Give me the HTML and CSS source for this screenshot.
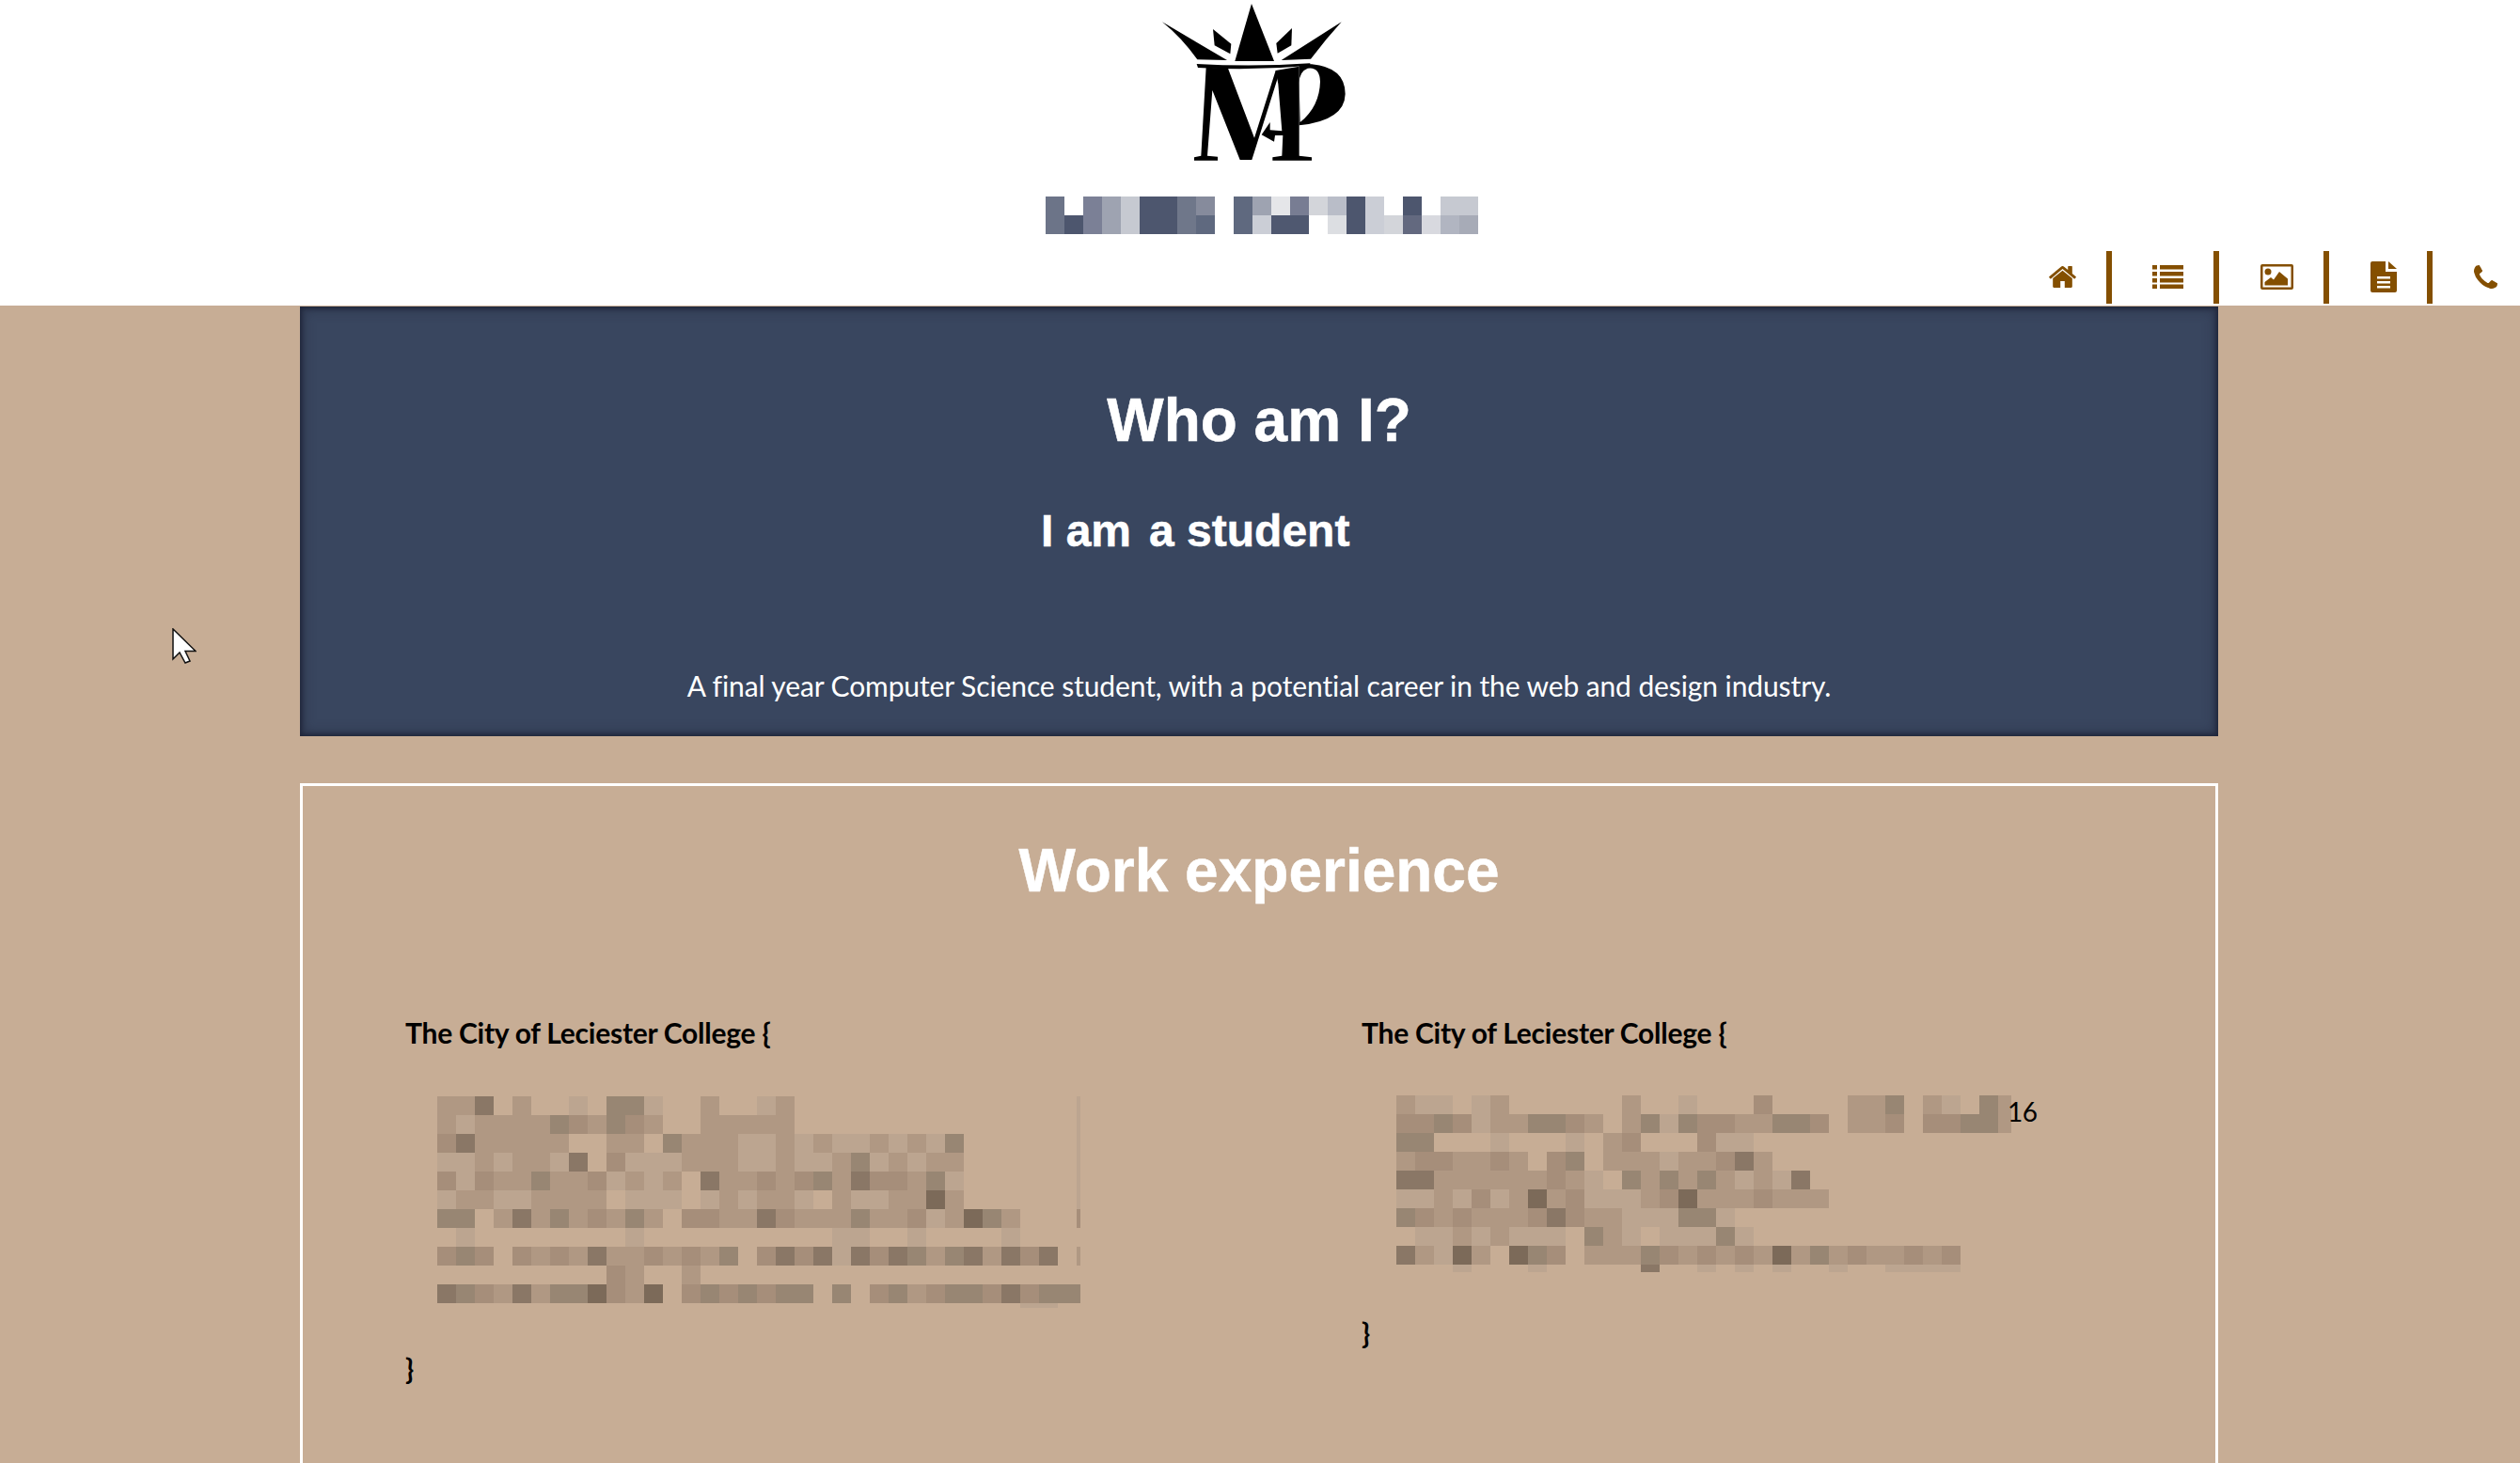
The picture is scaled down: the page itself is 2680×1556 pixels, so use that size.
FILE: index.html
```html
<!DOCTYPE html>
<html lang="en">
<head>
<meta charset="utf-8">
<title>Portfolio</title>
<link rel="stylesheet" href="styles.css">
</head>
<body>
<header class="site-header">
  <svg class="logo" viewBox="0 0 840 570" role="img" aria-label="MP crown logo">
    <path d="M393 12L465 195H340Z"/>
    <path d="M108 70L315 192L220 190Q170 120 108 70Z"/>
    <path d="M680 70L488 192L582 188Q630 125 680 70Z"/>
    <path d="M270 93L328 140L325 172L275 145Z"/>
    <path d="M522 90L520 145L476 170L472 138Z"/>
    <path d="M218 204Q400 214 580 202L580 209Q400 226 222 216Z"/>
    <path d="M248 215L318 218L402 440L470 225L484 225L394 510L356 510L268 288L252 497L285 500V512H210V502L232 497Z"/>
    <path d="M478 268L470 225L545 212V497L585 502V512H460V502L490 497L493 432L468 432L465 452L425 430L452 390L452 415L490 418Z"/>
    <path fill-rule="evenodd" d="M545 205H585Q692 215 692 300Q690 385 545 400ZM548 390Q610 340 612 260Q610 212 572 218Q545 228 545 265Z"/>
  </svg>
  <svg class="mosaic brand-name" width="460" height="40" role="img" aria-label="Pixelated name"
       data-rows="A.CDEBBFG.HDIJKLBM.B.EE ABCDEBBFH.HMNN.OBMKPQRS"></svg>
  <nav class="nav">
    <a class="nav-item nav-item-first" href="#home">
      <svg class="icon" width="29" height="23" viewBox="86 256 1620 1280"><path d="M1472 992v480q0 26-19 45t-45 19h-384v-384h-256v384h-384q-26 0-45-19t-19-45v-480q0-1 .5-3t.5-3l575-474 575 474q1 2 1 6zm223-69l-62 74q-8 9-21 11h-3q-13 0-21-7l-692-577-692 577q-12 8-24 7-13-2-21-11l-62-74q-8-10-7-23.500t11-21.500l719-599q32-26 76-26t76 26l244 204v-195q0-14 9-23t23-9h192q14 0 23 9t9 23v408l219 182q10 8 11 21.500t-7 23.500z"/></svg>
    </a>
    <a class="nav-item nav-item-list" href="#list">
      <svg class="icon" width="33" height="25" viewBox="0 0 33 25"><path d="M0 0h5v4.500H0zM8 0h25v4.500H8zM0 7h5v4.500H0zM8 7h25v4.500H8zM0 14h5v4.500H0zM8 14h25v4.500H8zM0 20.500h5V25H0zM8 20.500h25V25H8z"/></svg>
    </a>
    <a class="nav-item" href="#gallery">
      <svg class="icon" width="35" height="27" viewBox="0 0 35 27"><path fill-rule="evenodd" d="M2 0h31a2 2 0 0 1 2 2v23a2 2 0 0 1-2 2H2a2 2 0 0 1-2-2V2a2 2 0 0 1 2-2zM2.500 2.500v22h30v-22z"/><circle cx="8" cy="8" r="3.500"/><path d="M4.500 22.500V19L11 14L14 16.500L20 8L29 15.500V22.500Z"/></svg>
    </a>
    <a class="nav-item" href="#cv">
      <svg class="icon" width="28" height="33" viewBox="0 0 28 33"><path fill-rule="evenodd" d="M2 0H16V11H28V31a2 2 0 0 1-2 2H2a2 2 0 0 1-2-2V2a2 2 0 0 1 2-2ZM7 16v2.500H21V16ZM7 21v2.500H21V21ZM7 26v2.500H21V26Z"/><path d="M19 0L28 8H19Z"/></svg>
    </a>
    <a class="nav-item nav-item-last" href="#contact">
      <svg class="icon" width="25" height="25" viewBox="192 128 1408 1408"><path d="M1600 1240q0 27-10 70.500t-21 68.500q-21 50-122 106-94 51-186 51-27 0-53-3.500t-57.500-12.500-47-14.500-55.500-20.500-49-18q-98-35-175-83-127-79-264-216t-216-264q-48-77-83-175-3-9-18-49t-20.500-55.500-14.500-47-12.500-57.500-3.500-53q0-92 51-186 56-101 106-122 25-11 68.500-21t70.500-10q14 0 21 3 18 6 53 76 11 19 30 54t35 63.500 31 53.500q3 4 17.500 25t21.500 35.500 7 28.500q0 20-28.500 50t-62 55-62 53-28.500 46q0 9 5 22.500t8.500 20.500 14 24 11.500 19q76 137 174 235t235 174q2 1 19 11.500t24 14 20.500 8.500 22.500 5q18 0 46-28.500t53-62 55-62 50-28.500q14 0 28.500 7t35.500 21.500 25 17.500q25 15 53.500 31t63.500 35 54 30q70 35 76 53 3 7 3 21z"/></svg>
    </a>
  </nav>
</header>

<main class="content">
  <section class="intro">
    <h1 class="title">Who am I?</h1>
    <p class="typed"><span>I am</span><span>a student</span></p>
    <p class="summary">A final year Computer Science student, with a potential career in the web and design industry.</p>
  </section>

  <section class="experience">
    <h2 class="title">Work experience</h2>
    <div class="jobs">
      <article class="job">
        <h3 class="job-name">The City of Leciester College {</h3>
        <div class="job-body">
          <svg class="mosaic" width="684" height="225" role="img" aria-label="Pixelated job description"
               data-rows="bbe.b..a.dda..b..ab...............a babbbbdcbdcb..bbbbb...............a cebbbbb..bb.dbbbaababaababad......a aababbae.caaabbbaabaabdababb......a cacbbdbbcabab.ebbcbcdbeccbda......a abbaabbbb.aaa.ababba.baabbfb......a dd.bebdbcbdb.ccbbecbbbdbbcabfdb...c .a........a..........aa..a....a cdc.cbcbebbcbcbd.ceceaecedbdebece.b .........cb..b edcbebddfcbf.cdcdcdd.d.cdbcddcecddd ...............................aa"></svg>
        </div>
        <p class="brace">}</p>
      </article>
      <article class="job job-right">
        <h3 class="job-name">The City of Leciester College {</h3>
        <div class="job-body">
          <svg class="mosaic" width="654" height="188" role="img" aria-label="Pixelated job description"
               data-rows="baa.ab......b..a...c....bbd.ba.db ccdcabbddcb.bdadccbbddc.bbc.ccddb dd...a...a.bc...caa bccbbcb.cd.bbbabbceb eebbbbbbcba.dbdbdbabae aabacabfbcaaabcfbbbcbbb dcbcbbbcecbbaaadda .aababaaa.dba.aaada ebafb.fdc.bbbdcbcbcbfbdbcbbcbc ...a...a.....e..a.a.a..a..aaaa"></svg>
          <span class="year">16</span>
        </div>
        <p class="brace">}</p>
      </article>
    </div>
  </section>
</main>

<svg class="cursor" width="26" height="38" viewBox="0 0 26 38" aria-hidden="true"><path d="M1 1V33L8 26L14 37L19 35L14 24.500H25Z"/></svg>
<script src="mosaic.js"></script>
</body>
</html>
```
FILE: styles.css
```css
html, body {
  margin: 0;
  height: 1556px;
  overflow: hidden;
}
body {
  position: relative;
  background: #c7ad95;
  font-family: Lato, "Liberation Sans", sans-serif;
  color: #000;
}
.site-header {
  background: #fff;
  height: 325px;
  display: flex;
  flex-direction: column;
  align-items: center;
}
.logo {
  width: 280px;
  height: 190px;
  display: block;
  fill: #000;
  filter: blur(0.5px);
}
.brand-name {
  margin: 19px 0 18px 4px;
}
.mosaic {
  display: block;
  flex: none;
  shape-rendering: crispEdges;
}
.nav {
  align-self: flex-end;
  display: flex;
  align-items: stretch;
  height: 56px;
}
.nav-item {
  display: flex;
  align-items: center;
  padding: 0 32px 2px 44px;
  border-right: 6px solid #844f00;
}
.nav-item-first {
  padding-left: 0;
  padding-right: 32px;
}
.nav-item-list {
  padding-left: 43px;
}
.nav-item-last {
  border-right: 0;
  padding-right: 24px;
}
.icon {
  display: block;
  fill: #844f00;
}
.content {
  width: 2040px;
  margin-left: 319px;
  padding-top: 1px;
}
.intro {
  background: #39465f;
  height: 457px;
  box-sizing: border-box;
  padding-top: 76px;
  box-shadow: inset 0 0 4px 2px #20263a, inset 0 0 12px 4px rgba(32, 38, 58, .5);
  color: #fff;
  text-align: center;
}
.title {
  margin: 0;
  font: bold 64px/90px "Liberation Sans", Arial, sans-serif;
  color: #fff;
  text-align: center;
  -webkit-text-stroke: 0.5px #fff;
}
.typed {
  margin: 43px 0 0;
  padding-left: 788px;
  display: flex;
  gap: 19px;
  font: bold 48px/60px "Liberation Sans", Arial, sans-serif;
  -webkit-text-stroke: 0.5px #fff;
}
.summary {
  margin: 114px 0 0;
  font-size: 30px;
  line-height: 40px;
  letter-spacing: -0.1px;
}
.experience {
  margin-top: 50px;
  border: 3px solid #fff;
  height: 900px;
  box-sizing: border-box;
  padding-top: 45px;
}
.jobs {
  display: grid;
  grid-template-columns: 1017px 1fr;
  padding: 107px 0 0 109px;
  align-items: start;
}
.job-name {
  margin: 0 0 48px;
  font-size: 30px;
  line-height: 40px;
  font-weight: 700;
  letter-spacing: -0.25px;
}
.job-body {
  display: flex;
  align-items: flex-start;
  margin-left: 34px;
}
.job-right .job-body {
  margin-left: 37px;
  margin-top: -1px;
}
.year {
  font-size: 28px;
  line-height: 34px;
  letter-spacing: -0.6px;
  margin-left: -4px;
}
.brace {
  margin: 44px 0 0;
  font-size: 30px;
  line-height: 40px;
  font-weight: 700;
}
.cursor {
  position: absolute;
  left: 183px;
  top: 668px;
  fill: #fff;
  stroke: #111;
  stroke-width: 1.5px;
}
```
FILE: mosaic.js
```js
var PALETTE = {
  a: "#bca590", b: "#b09883", c: "#a68e7a", d: "#988673", e: "#8a7766", f: "#7c6a59",
  A: "#6c7488", B: "#4d566e", C: "#7b8096", D: "#9ea3b1", E: "#c6c9d1", F: "#6f778a",
  G: "#868b9c", H: "#5f697f", I: "#e5e6e9", J: "#787d93", K: "#d3d5da", L: "#b9bdc8",
  M: "#cbced6", N: "#4f5870", O: "#dcdee2", P: "#63697f", Q: "#d8d9df", R: "#b1b5c1",
  S: "#a7abb7"
};
var CELL = 20;
var NS = "http://www.w3.org/2000/svg";

document.querySelectorAll(".mosaic").forEach(function (svg) {
  svg.getAttribute("data-rows").split(" ").forEach(function (row, y) {
    row.split("").forEach(function (key, x) {
      if (!PALETTE[key]) return;
      var cell = document.createElementNS(NS, "rect");
      cell.setAttribute("x", x * CELL);
      cell.setAttribute("y", y * CELL);
      cell.setAttribute("width", CELL);
      cell.setAttribute("height", CELL);
      cell.setAttribute("fill", PALETTE[key]);
      svg.appendChild(cell);
    });
  });
});
```
